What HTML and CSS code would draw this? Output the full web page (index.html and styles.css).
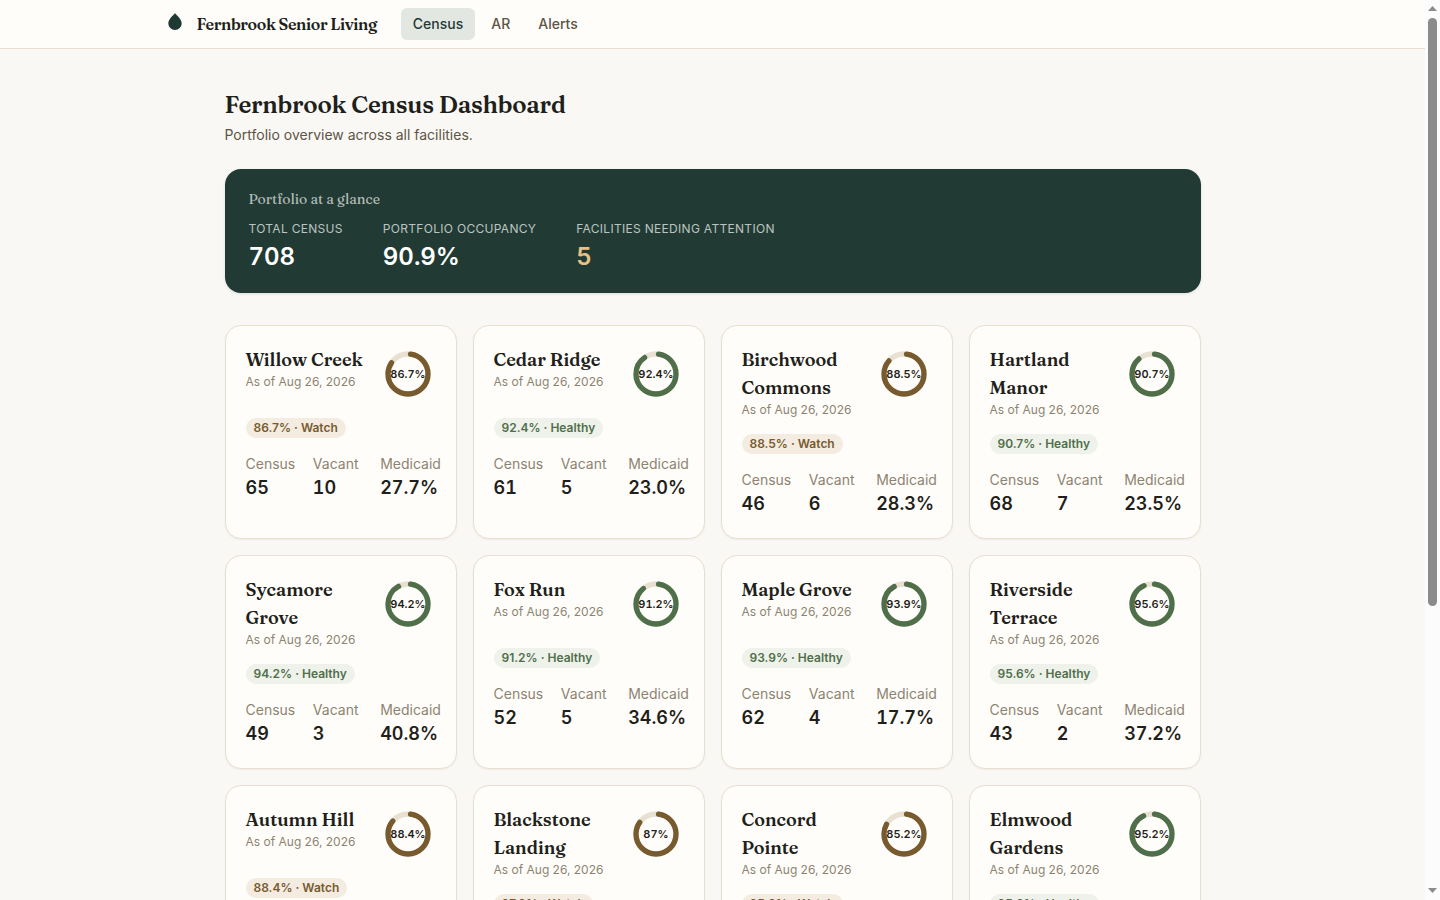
FILE: index.html
```html
<!DOCTYPE html>
<html lang="en">
<head>
<meta charset="utf-8">
<title>Fernbrook Census Dashboard</title>
<link rel="stylesheet" href="styles.css">
</head>
<body>
<div class="viewport">
<header class="topbar">
  <div class="topbar-inner">
    <a class="brand" href="#">
      <svg class="brand-mark" viewBox="0 0 28 28" aria-hidden="true"><path d="M14 3C12.600 5.200 7.300 8.800 7.300 13.600A6.700 6.300 0 0 0 20.700 13.600C20.700 8.800 15.400 5.200 14 3Z"/></svg>
      <span>Fernbrook Senior Living</span>
    </a>
    <nav class="tabs">
      <a class="tab is-active" href="#" aria-current="page">Census</a>
      <a class="tab" href="#">AR</a>
      <a class="tab" href="#">Alerts</a>
    </nav>
  </div>
</header>
<main class="page">
  <h1>Fernbrook Census Dashboard</h1>
  <p class="subtitle">Portfolio overview across all facilities.</p>
  <section class="glance">
    <h2>Portfolio at a glance</h2>
    <dl class="totals">
      <div><dt>Total census</dt><dd>708</dd></div>
      <div><dt>Portfolio occupancy</dt><dd>90.9%</dd></div>
      <div><dt>Facilities needing attention</dt><dd class="attention">5</dd></div>
    </dl>
  </section>
  <section class="cards" id="cards"></section>
</main>
</div>
<div class="scrollbar" aria-hidden="true">
  <svg class="scroll-arrow" viewBox="0 0 15 18"><path d="M3 11L7.500 6L12 11Z"/></svg>
  <div class="scroll-track"><div class="scroll-thumb"></div></div>
  <svg class="scroll-arrow" viewBox="0 0 15 18"><path d="M3 6L7.500 11L12 6Z"/></svg>
</div>
<script src="cards.js"></script>
</body>
</html>
```
FILE: styles.css
```css
* { box-sizing: border-box; }
body {
  display: flex;
  height: 100vh;
  margin: 0;
  background: #faf8f5;
  color: #1f1f1b;
  font: 14px/20px Inter, "Liberation Sans", sans-serif;
}
h1, h2, h3, p, dl, dd { margin: 0; }
a { color: inherit; text-decoration: none; }

.viewport { flex: 1; min-width: 0; overflow-y: auto; scrollbar-width: none; }
.scrollbar {
  display: flex;
  flex-direction: column;
  flex: none;
  width: 15px;
  background: #fcfcfc;
}
.scroll-arrow { flex: none; width: 15px; height: 18px; fill: #8b8b8b; }
.scroll-track { flex: 1; padding: 0 3px; }
.scroll-thumb { height: 68%; border-radius: 5px; background: #8b8b8b; }

.topbar { background: #fffdf9; border-bottom: 1px solid #e8dfcf; }
.topbar-inner {
  display: flex;
  align-items: center;
  gap: 24px;
  max-width: 1152px;
  height: 48px;
  margin: 0 auto;
  padding: 0 24px;
}
.brand {
  display: flex;
  align-items: center;
  gap: 8px;
  font: 600 16px/24px Fraunces, "Liberation Serif", serif;
  letter-spacing: -0.025em;
}
.brand-mark { width: 28px; height: 28px; fill: #1f3a33; }
.tabs { display: flex; gap: 4px; }
.tab {
  padding: 6px 12px;
  border-radius: 6px;
  color: #5c5546;
  font-weight: 500;
}
.tab.is-active { background: #e3e7e2; color: #1f3a33; }

.page { max-width: 1024px; margin: 0 auto; padding: 40px 24px 327px; }
h1 {
  font: 600 24px/32px Fraunces, "Liberation Serif", serif;
  letter-spacing: -0.01em;
}
.subtitle { margin-top: 4px; color: #5c5546; }

.glance {
  margin-top: 24px;
  padding: 20px 24px;
  border-radius: 16px;
  background: #213b34;
  color: #fff;
  box-shadow: 0 1px 3px rgba(31, 31, 27, .12);
}
.glance h2 {
  color: #b6beba;
  font: 400 14px/20px Fraunces, "Liberation Serif", serif;
}
.totals { display: flex; flex-wrap: wrap; gap: 40px; margin-top: 12px; }
.totals dt {
  color: #bcc4c1;
  font-size: 12px;
  line-height: 16px;
  letter-spacing: 0.3px;
  text-transform: uppercase;
}
.totals dd {
  margin-top: 4px;
  font-size: 24px;
  line-height: 32px;
  font-weight: 600;
  font-variant-numeric: tabular-nums;
}
.totals .attention { color: #e8c084; }

.cards {
  display: grid;
  grid-template-columns: repeat(4, minmax(0, 1fr));
  gap: 16px;
  margin-top: 32px;
}
.card {
  padding: 20px;
  border: 1px solid #e8dfcf;
  border-radius: 16px;
  background: #fffdf9;
  box-shadow: 0 1px 2px rgba(31, 31, 27, .06);
}
.card-head { display: flex; justify-content: space-between; gap: 12px; }
.card h3 { font: 600 18px/28px Fraunces, "Liberation Serif", serif; }
.date { color: #8c8472; font-size: 12px; line-height: 16px; }
.ring { flex: none; width: 56px; height: 56px; }
.ring circle { fill: none; stroke-width: 5.3; }
.ring .track { stroke: #e8e0d1; }
.ring .arc { stroke: #4f6f4b; stroke-linecap: round; }
.ring text {
  fill: #1f1f1b;
  font-size: 11px;
  font-weight: 600;
  font-variant-numeric: tabular-nums;
  text-anchor: middle;
}
.badge {
  display: inline-block;
  margin-top: 16px;
  padding: 2px 8px;
  border-radius: 10px;
  background: #eff2ea;
  color: #4f6f4b;
  font-size: 12px;
  line-height: 16px;
  font-weight: 600;
  vertical-align: top;
}
.watch .badge { background: #f4ece0; color: #775b2f; }
.watch .arc { stroke: #775b2f; }
.stats {
  display: grid;
  grid-template-columns: repeat(3, minmax(0, 1fr));
  gap: 12px;
  margin-top: 16px;
}
.stats dt { color: #8c8472; }
.stats dd {
  font-size: 18px;
  line-height: 28px;
  font-weight: 600;
  font-variant-numeric: tabular-nums;
}
```
FILE: cards.js
```js
// name, occupancy, census, vacant, medicaid
const facilities = [
  ["Willow Creek", "86.7", 65, 10, "27.7"],
  ["Cedar Ridge", "92.4", 61, 5, "23.0"],
  ["Birchwood Commons", "88.5", 46, 6, "28.3"],
  ["Hartland Manor", "90.7", 68, 7, "23.5"],
  ["Sycamore Grove", "94.2", 49, 3, "40.8"],
  ["Fox Run", "91.2", 52, 5, "34.6"],
  ["Maple Grove", "93.9", 62, 4, "17.7"],
  ["Riverside Terrace", "95.6", 43, 2, "37.2"],
  ["Autumn Hill", "88.4", 61, 8, "29.5"],
  ["Blackstone Landing", "87.0", 67, 10, "31.3"],
  ["Concord Pointe", "85.2", 75, 13, "26.7"],
  ["Elmwood Gardens", "95.2", 59, 3, "30.5"]
];
const CAP = 2.1; // rounded cap, as a share of the ring

document.getElementById("cards").innerHTML = facilities.map(([name, occ, census, vacant, medicaid]) => {
  const value = Number(occ);
  const status = value < 90 ? "Watch" : "Healthy";
  return `<article class="card ${status.toLowerCase()}">
    <div class="card-head">
      <div><h3>${name}</h3><div class="date">As of Aug 26, 2026</div></div>
      <svg class="ring" viewBox="0 0 56 56" role="img" aria-label="Occupancy ${value}%">
        <circle class="track" cx="28" cy="28" r="20"/>
        <circle class="arc" cx="28" cy="28" r="20" pathLength="100" transform="rotate(-90 28 28)"
          stroke-dasharray="${(value - 2 * CAP).toFixed(1)} 100" stroke-dashoffset="${-CAP}"/>
        <text x="28" y="32">${value}%</text>
      </svg>
    </div>
    <span class="badge">${occ}% · ${status}</span>
    <dl class="stats">
      <div><dt>Census</dt><dd>${census}</dd></div>
      <div><dt>Vacant</dt><dd>${vacant}</dd></div>
      <div><dt>Medicaid</dt><dd>${medicaid}%</dd></div>
    </dl>
  </article>`;
}).join("");
```
